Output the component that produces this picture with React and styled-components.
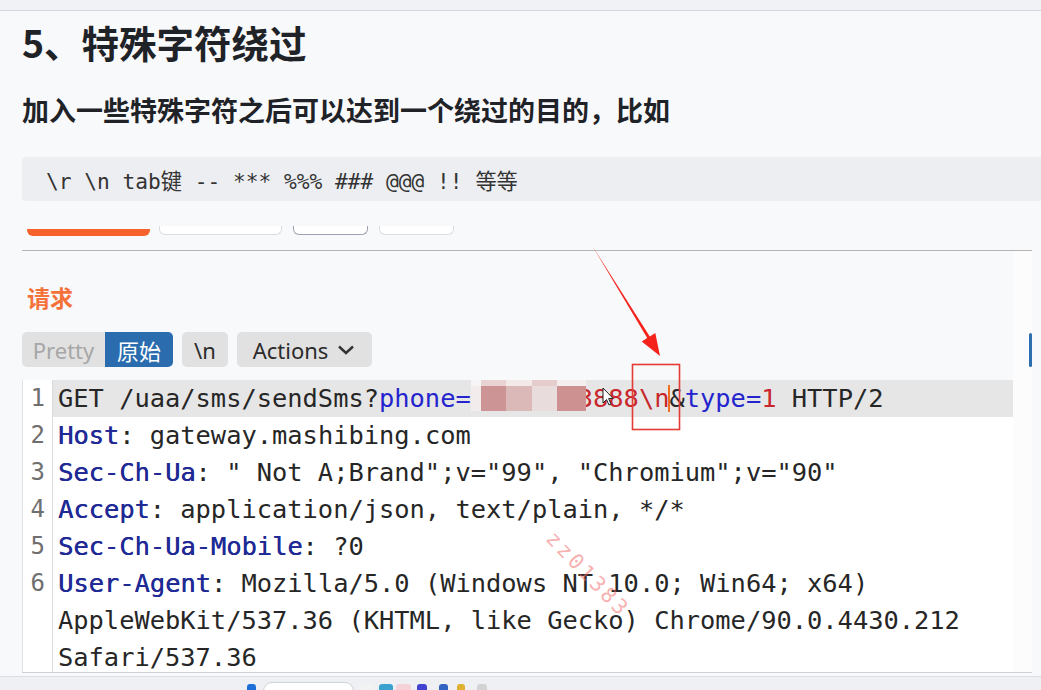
import React from "react";
import styled, { createGlobalStyle } from "styled-components";

const MONO = `"DejaVu Sans Mono", "Liberation Mono", "Noto Sans CJK SC", monospace`;
const CJK = `"Noto Sans CJK SC", "Noto Sans", sans-serif`;

const mosaic = [
  "#f6f4f4", "#e9d3d3", "#f3e9e9", "#e6cdcd", "#f4eeee",
  "#f2ecec", "#cc9494", "#dcb9b9", "#e9dcdc", "#cd9191",
];

const taskIcons = [
  { w: 9, c: "#1d6fd8", ml: 0 },
  { w: 89, c: "#ffffff", ml: 7, search: true },
  { w: 14, c: "#f2f2f2", ml: 5 },
  { w: 14, c: "#3ba2cf", ml: 6 },
  { w: 15, c: "#f4d2d8", ml: 3 },
  { w: 10, c: "#4343d2", ml: 6 },
  { w: 9, c: "#3262c2", ml: 12 },
  { w: 8, c: "#e0b030", ml: 9 },
  { w: 10, c: "#d2d2d2", ml: 12 },
];

function App() {
  return (
    <>
      <GlobalStyle />
      <Page>
        <TopStrip />
        <Article>
          <Title>5、特殊字符绕过</Title>
          <Lead>加入一些特殊字符之后可以达到一个绕过的目的，比如</Lead>
          <CodeBlock>{"\\r \\n tab键 -- *** %%% ### @@@ !! 等等"}</CodeBlock>

          <TabStubs>
            <TabStub $w={123} $active />
            <TabStub $w={121} />
            <TabStub $w={73} $dark />
            <TabStub $w={73} />
          </TabStubs>

          <Shot>
            <ShotMain>
              <ReqLabel>请求</ReqLabel>
              <Toolbar>
                <Segmented>
                  <SegBtn $w={83}>Pretty</SegBtn>
                  <SegBtn $w={68} $active>原始</SegBtn>
                </Segmented>
                <ToolBtn $w={46}>\n</ToolBtn>
                <ToolBtn $w={135}>
                  Actions
                  <svg width="20" height="12" viewBox="0 0 20 12">
                    <path d="M3 2.5 L10 9 L17 2.5" fill="none" stroke="#333" strokeWidth="2.4" />
                  </svg>
                </ToolBtn>
              </Toolbar>

              <Editor>
                <Row>
                  <Gutter>1</Gutter>
                  <Code $hl>
                    {"GET /uaa/sms/sendSms?"}
                    <Param>phone=</Param>
                    <Value>
                      13800003888
                      <Mosaic>
                        {mosaic.map((c, i) => (
                          <Cell key={i} $c={c} />
                        ))}
                      </Mosaic>
                    </Value>
                    <Value>\n</Value>
                    <Caret />
                    {"&"}
                    <Param>type=</Param>
                    <Value>1</Value>
                    {" HTTP/2"}
                  </Code>
                </Row>
                <Row>
                  <Gutter>2</Gutter>
                  <Code>
                    <Header>Host</Header>: gateway.mashibing.com
                  </Code>
                </Row>
                <Row>
                  <Gutter>3</Gutter>
                  <Code>
                    <Header>Sec-Ch-Ua</Header>
                    {': " Not A;Brand";v="99", "Chromium";v="90"'}
                  </Code>
                </Row>
                <Row>
                  <Gutter>4</Gutter>
                  <Code>
                    <Header>Accept</Header>: application/json, text/plain, */*
                  </Code>
                </Row>
                <Row>
                  <Gutter>5</Gutter>
                  <Code>
                    <Header>Sec-Ch-Ua-Mobile</Header>: ?0
                  </Code>
                </Row>
                <Row>
                  <Gutter>6</Gutter>
                  <Code>
                    <Header>User-Agent</Header>: Mozilla/5.0 (Windows NT 10.0; Win64; x64)
                  </Code>
                </Row>
                <Row>
                  <Gutter />
                  <Code>AppleWebKit/537.36 (KHTML, like Gecko) Chrome/90.0.4430.212</Code>
                </Row>
                <Row>
                  <Gutter />
                  <Code>Safari/537.36</Code>
                </Row>
              </Editor>
            </ShotMain>
            <ScrollStrip>
              <Thumb />
            </ScrollStrip>
          </Shot>
        </Article>

        <Taskbar>
          {taskIcons.map((t, i) => (
            <TaskIcon key={i} $w={t.w} $c={t.c} $ml={t.ml} $search={t.search} />
          ))}
        </Taskbar>

        <Watermark>zz01383</Watermark>

        <Overlay viewBox="0 0 1041 690" width="1041" height="690">
          <polygon
            points="593,247 649.8,336.5 655.3,333.1 660,356 641.7,341.5 647.2,338.1"
            fill="#f4231c"
          />
          <rect x="632.5" y="364.5" width="47" height="65" fill="none" stroke="#e53b36" strokeWidth="1.6" />
          <path
            d="M603 388 L603 403 L606.5 399.5 L609 405 L611 404 L608.6 398.6 L613 398.3 Z"
            fill="#fff"
            stroke="#222"
            strokeWidth="1"
            strokeLinejoin="round"
          />
        </Overlay>
      </Page>
    </>
  );
}

export default App;

const GlobalStyle = createGlobalStyle`
  html, body {
    margin: 0;
    padding: 0;
  }
  body {
    background: #f8f9fa;
    overflow: hidden;
  }
`;

const Page = styled.div`
  position: relative;
  width: 1041px;
  height: 690px;
  display: flex;
  flex-direction: column;
  overflow: hidden;
  background: #f8f9fa;
  font-family: "Noto Sans", ${CJK};
`;

const TopStrip = styled.div`
  height: 10px;
  flex-shrink: 0;
  background: #f1f2f5;
  border-bottom: 1px solid #d5d7dc;
`;

const Article = styled.div`
  flex: 1;
  min-height: 0;
  display: flex;
  flex-direction: column;
  padding-left: 22px;
`;

const Title = styled.h1`
  margin: 9px 0 0;
  font: 700 37.5px/44px ${CJK};
  color: #1f2328;
`;

const Lead = styled.p`
  margin: 28px 0 0;
  font: 700 27px/36px ${CJK};
  color: #1f2328;
`;

const CodeBlock = styled.div`
  margin-top: 29px;
  height: 44px;
  flex-shrink: 0;
  display: flex;
  align-items: center;
  padding-left: 24px;
  background: #eceef1;
  border-radius: 4px 0 0 4px;
  font-size: 21.2px;
  font-family: ${MONO};
  color: #333;
  white-space: pre;
`;

const TabStubs = styled.div`
  margin-top: 21px;
  height: 14px;
  flex-shrink: 0;
  display: flex;
  align-items: flex-end;
  gap: 9px;
  padding-left: 5px;
`;

const TabStub = styled.div`
  width: ${(p) => p.$w}px;
  height: ${(p) => (p.$active ? 7 : 8)}px;
  margin-bottom: ${(p) => (p.$active ? 0 : 1)}px;
  margin-right: ${(p) => (p.$active ? 0 : 2)}px;
  border-radius: 0 0 6px 6px;
  background: ${(p) => (p.$active ? "#f5622e" : "#ffffff")};
  border: ${(p) => (p.$active ? "none" : `1px solid ${p.$dark ? "#9fa1b3" : "#dcdde2"}`)};
  border-top: none;
`;

const Shot = styled.div`
  margin-top: 14px;
  margin-right: 9px;
  flex: 1;
  min-height: 0;
  display: flex;
  border-top: 1.5px solid #b5b5b5;
  border-bottom: 1px solid #cfd0d3;
`;

const ShotMain = styled.div`
  flex: 1;
  min-width: 0;
  display: flex;
  flex-direction: column;
`;

const ScrollStrip = styled.div`
  width: 19px;
  flex-shrink: 0;
  display: flex;
  flex-direction: column;
  align-items: flex-end;
  background: #fcfcfd;
`;

const Thumb = styled.div`
  margin-top: 82px;
  width: 3px;
  height: 34px;
  border-radius: 2px;
  background: #2e6db0;
`;

const ReqLabel = styled.div`
  margin-top: 31px;
  padding-left: 5px;
  font: 700 23px/30px ${CJK};
  color: #f4713a;
`;

const Toolbar = styled.div`
  margin-top: 20px;
  height: 35px;
  display: flex;
  gap: 9px;
`;

const Segmented = styled.div`
  display: flex;
  border-radius: 5px;
  overflow: hidden;
`;

const SegBtn = styled.div`
  width: ${(p) => p.$w}px;
  display: flex;
  align-items: center;
  justify-content: center;
  font-size: 22px;
  background: ${(p) => (p.$active ? "#2a6cae" : "#e1e1e1")};
  color: ${(p) => (p.$active ? "#ffffff" : "#a6a6a6")};
`;

const ToolBtn = styled.div`
  width: ${(p) => p.$w}px;
  display: flex;
  align-items: center;
  justify-content: center;
  gap: 8px;
  border-radius: 5px;
  background: #e1e1e1;
  color: #2b2b2b;
  font-size: 22px;
`;

const Editor = styled.div`
  margin-top: 13px;
  flex: 1;
  min-height: 0;
  overflow: hidden;
  background: #ffffff;
  border-left: 1px solid #e3e3e3;
`;

const Row = styled.div`
  display: flex;
  height: 37px;
`;

const Gutter = styled.div`
  width: 30px;
  box-sizing: border-box;
  flex-shrink: 0;
  border-right: 1px solid #dcdcdc;
  padding-right: 7px;
  text-align: right;
  font: 24px/37px ${MONO};
  color: #6f6f6f;
`;

const Code = styled.div`
  flex: 1;
  position: relative;
  padding-left: 5px;
  font: 25.4px/37px ${MONO};
  color: #262626;
  white-space: pre;
  background: ${(p) => (p.$hl ? "#e6e6e6" : "transparent")};
`;

const Param = styled.span`
  color: #2424cf;
`;

const Header = styled.span`
  color: #1f2a95;
  text-shadow: 0.4px 0 0 #1f2a95;
`;

const Value = styled.span`
  position: relative;
  color: #c8282b;
`;

const Mosaic = styled.span`
  position: absolute;
  left: 0;
  top: -6px;
  width: 115px;
  height: 34px;
  display: grid;
  grid-template-columns: 10px 25px 26px 25px 29px;
  grid-template-rows: 9px 25px;
`;

const Cell = styled.span`
  background: ${(p) => p.$c};
`;

const Caret = styled.span`
  display: inline-block;
  width: 2px;
  height: 27px;
  margin: 0 -1px;
  vertical-align: -5px;
  background: #f07020;
`;

const Taskbar = styled.div`
  box-sizing: border-box;
  height: 14px;
  margin-top: 3px;
  flex-shrink: 0;
  display: flex;
  align-items: flex-start;
  padding: 7px 0 0 247px;
  background: #eef0f3;
  border-top: 1px solid #dadde2;
  overflow: hidden;
`;

const TaskIcon = styled.div`
  width: ${(p) => p.$w}px;
  height: 12px;
  margin-left: ${(p) => p.$ml}px;
  margin-top: ${(p) => (p.$search ? -2 : 0)}px;
  border-radius: ${(p) => (p.$search ? "9px 9px 0 0" : "3px 3px 0 0")};
  background: ${(p) => p.$c};
  border: ${(p) => (p.$search ? "1px solid #cfd2d8" : "none")};
`;

const Watermark = styled.span`
  position: absolute;
  left: 533px;
  top: 562px;
  transform: rotate(46deg);
  font: 21px ${MONO};
  letter-spacing: 3px;
  color: rgba(240, 110, 110, 0.55);
  pointer-events: none;
`;

const Overlay = styled.svg`
  position: absolute;
  left: 0;
  top: 0;
  pointer-events: none;
`;
